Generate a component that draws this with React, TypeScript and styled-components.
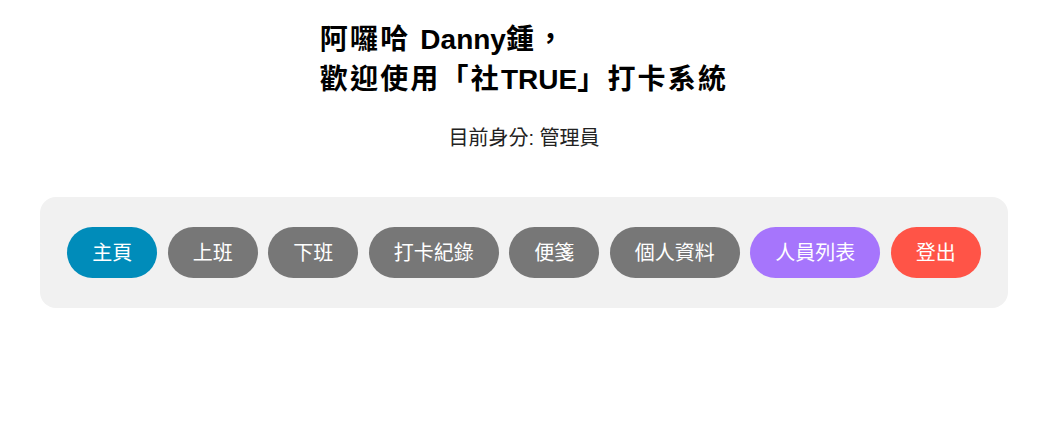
import React from "react";
import styled, { createGlobalStyle } from "styled-components";

const GlobalStyle = createGlobalStyle`
  html, body {
    margin: 0;
    padding: 0;
    background: #ffffff;
  }
  body {
    font-family: "Liberation Sans", "Noto Sans CJK TC", Arial, sans-serif;
    color: #000;
  }
`;

const Page = styled.div`
  display: flex;
  flex-direction: column;
  align-items: center;
  padding-top: 20px;
`;

const Heading = styled.h1`
  margin: 0;
  font-size: 28px;
  line-height: 40px;
  font-weight: 700;
  letter-spacing: 2.2px;
  text-align: left;
  color: #000;
`;

const Latin = styled.span`
  letter-spacing: 0;
`;

const Role = styled.p`
  margin: 26px 0 0;
  font-size: 20px;
  line-height: 24px;
  color: #222;
  text-align: center;
`;

const Panel = styled.nav`
  align-self: stretch;
  margin: 47px 40px 0;
  padding: 30px 26px;
  background: #f1f1f1;
  border-radius: 16px;
  display: flex;
  justify-content: center;
  gap: 10.5px;
`;

type Tone = "primary" | "neutral" | "admin" | "danger";

const tones: Record<Tone, string> = {
  primary: "#008cba",
  neutral: "#777777",
  admin: "#a675fc",
  danger: "#ff5447",
};

const NavButton = styled.button<{ $tone: Tone }>`
  height: 51px;
  padding: 0 25px;
  border: none;
  border-radius: 26px;
  background: ${(p) => tones[p.$tone]};
  color: #ffffff;
  font-family: "Liberation Sans", "Noto Sans CJK TC", sans-serif;
  font-size: 20px;
  line-height: 24px;
  white-space: nowrap;
  cursor: pointer;
`;

const items: { label: string; tone: Tone }[] = [
  { label: "主頁", tone: "primary" },
  { label: "上班", tone: "neutral" },
  { label: "下班", tone: "neutral" },
  { label: "打卡紀錄", tone: "neutral" },
  { label: "便箋", tone: "neutral" },
  { label: "個人資料", tone: "neutral" },
  { label: "人員列表", tone: "admin" },
  { label: "登出", tone: "danger" },
];

export default function App() {
  return (
    <>
      <GlobalStyle />
      <Page>
        <Heading>
          阿囉哈 <Latin>Danny</Latin>鍾，
          <br />
          歡迎使用「社<Latin>TRUE</Latin>」打卡系統
        </Heading>
        <Role>目前身分: 管理員</Role>
        <Panel>
          {items.map((it) => (
            <NavButton key={it.label} $tone={it.tone}>
              {it.label}
            </NavButton>
          ))}
        </Panel>
      </Page>
    </>
  );
}
